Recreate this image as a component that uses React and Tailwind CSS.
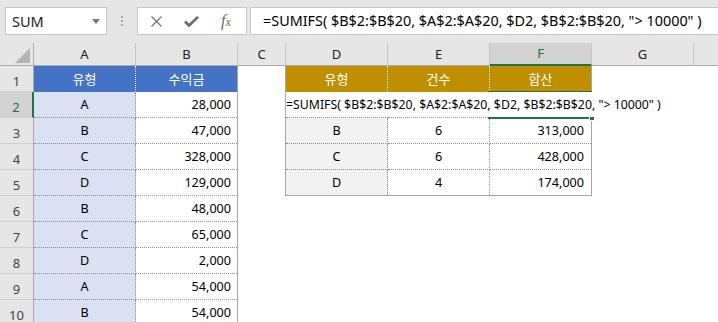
export default function App() {
  const ab = [
    ["A", "28,000"],
    ["B", "47,000"],
    ["C", "328,000"],
    ["D", "129,000"],
    ["B", "48,000"],
    ["C", "65,000"],
    ["D", "2,000"],
    ["A", "54,000"],
    ["B", "54,000"],
  ];
  const df = [
    ["B", "6", "313,000"],
    ["C", "6", "428,000"],
    ["D", "4", "174,000"],
  ];
  const rowNums = [1, 2, 3, 4, 5, 6, 7, 8, 9, 10];
  const formula = '=SUMIFS( $B$2:$B$20, $A$2:$A$20, $D2, $B$2:$B$20, "> 10000" )';

  return (
    <div className="w-[718px] h-[322px] overflow-hidden bg-white text-black font-['Noto_Sans','Noto_Sans_CJK_KR',sans-serif] text-[12.6px] leading-none">
      {/* Formula bar area */}
      <div className="h-[43px] bg-[#e6e6e6] flex items-start pt-[7px]">
        <div className="ml-[5px] w-[102px] h-[28px] bg-white border border-[#c6c6c6] flex items-center pl-[6px] pr-[6px] text-[14.5px] text-[#222]">
          <span className="flex-1">SUM</span>
          <svg width="8" height="5" viewBox="0 0 8 5">
            <path d="M0 0H8L4 5Z" fill="#7a7a7a" />
          </svg>
        </div>
        <div className="w-[30px] h-[28px] flex flex-col items-center justify-center gap-[2px]">
          <div className="w-[2px] h-[2px] bg-[#a8a8a8]" />
          <div className="w-[2px] h-[2px] bg-[#a8a8a8]" />
          <div className="w-[2px] h-[2px] bg-[#a8a8a8]" />
        </div>
        <div className="w-[110px] h-[28px] bg-white border border-[#c6c6c6] flex items-center pl-[12px]">
          <svg width="13" height="13" viewBox="0 0 13 13">
            <path d="M1.5 1.5L11.5 11.5M11.5 1.5L1.5 11.5" stroke="#7a7a7a" strokeWidth="1.4" />
          </svg>
          <svg className="ml-[21px]" width="15" height="11" viewBox="0 0 15 11">
            <path d="M1 5.5L5 9.5L14 1" stroke="#6f6f6f" strokeWidth="2.8" fill="none" />
          </svg>
          <span className="ml-[22px] font-['Liberation_Serif',serif] italic text-[16px] text-[#6a6a6a]">
            f<span className="text-[12px]">x</span>
          </span>
        </div>
        <div className="ml-[3px] flex-1 h-[28px] bg-white border border-r-0 border-[#c6c6c6] pl-[12px] flex items-center text-[14.4px] whitespace-nowrap overflow-hidden">
          {formula}
        </div>
      </div>

      {/* Column headers */}
      <div className="flex h-[23px] bg-[#e6e6e6] text-[13px] text-[#222]">
        <div className="w-[34px] border-r border-b border-[#ababab] flex items-end justify-end pr-[3px] pb-[2px]">
          <svg width="15" height="15" viewBox="0 0 15 15">
            <path d="M15 0V15H0Z" fill="#b4b4b4" />
          </svg>
        </div>
        <div className="w-[102px] border-r border-b border-r-[#c6c6c6] border-b-[#ababab] flex items-center justify-center">A</div>
        <div className="w-[102px] border-r border-b border-r-[#c6c6c6] border-b-[#ababab] flex items-center justify-center">B</div>
        <div className="w-[48px] border-r border-b border-r-[#c6c6c6] border-b-[#ababab] flex items-center justify-center">C</div>
        <div className="w-[102px] border-r border-b border-r-[#c6c6c6] border-b-[#ababab] flex items-center justify-center">D</div>
        <div className="w-[102px] border-r border-b border-r-[#c6c6c6] border-b-[#ababab] flex items-center justify-center">E</div>
        <div className="w-[102px] border-r border-r-[#c6c6c6] border-b-2 border-b-[#217346] bg-[#d2d2d2] text-[#217346] flex items-center justify-center">F</div>
        <div className="w-[102px] border-r border-b border-r-[#c6c6c6] border-b-[#ababab] flex items-center justify-center">G</div>
        <div className="flex-1 border-b border-[#ababab]" />
      </div>

      {/* Body */}
      <div className="flex items-start">
        {/* Row headers */}
        <div className="w-[34px] flex flex-col bg-[#e6e6e6] text-[13px] text-[#444]">
          {rowNums.map((n) =>
            n === 2 ? (
              <div key={n} className="h-[26px] border-b border-b-[#cfcfcf] border-r-2 border-r-[#217346] bg-[#d2d2d2] text-[#217346] flex items-center justify-center pt-[5px]">
                {n}
              </div>
            ) : (
              <div key={n} className="h-[26px] border-b border-b-[#cfcfcf] border-r border-r-[#ababab] flex items-center justify-center pt-[5px]">
                {n}
              </div>
            )
          )}
        </div>

        {/* Table A:B */}
        <div className="w-[204px] flex flex-col border-r border-[#a6a6a6]">
          <div className="flex h-[26px] bg-[#4472c4] text-white text-[13px]">
            <div className="w-[102px] border-r border-dotted border-white flex items-center justify-center">유형</div>
            <div className="flex-1 flex items-center justify-center">수익금</div>
          </div>
          {ab.map(([t, v], i) => (
            <div key={i} className="flex h-[26px]">
              <div className="w-[102px] bg-[#d9e1f2] border-r border-b border-dotted border-[#8c8c8c] flex items-center justify-center pt-[2px]">{t}</div>
              <div className="flex-1 border-b border-dotted border-[#8c8c8c] flex items-center justify-end pr-[6px] pt-[2px]">{v}</div>
            </div>
          ))}
        </div>

        {/* Column C */}
        <div className="w-[47px]" />

        {/* Table D:F */}
        <div className="w-[307px] flex flex-col border-l border-r border-b border-[#a6a6a6]">
          <div className="flex h-[26px] bg-[#bf8f00] text-white text-[13px]">
            <div className="w-[102px] border-r border-dotted border-white flex items-center justify-center">유형</div>
            <div className="w-[102px] border-r border-dotted border-white flex items-center justify-center">건수</div>
            <div className="flex-1 flex items-center justify-center">합산</div>
          </div>
          <div className="relative flex h-[26px]">
            <div className="w-[102px] border-b border-dotted border-[#8c8c8c]" />
            <div className="w-[102px] border-b border-dotted border-[#8c8c8c]" />
            <div className="relative flex-1">
              <div className="absolute left-[-2px] top-[-1px] w-[104px] h-[2px] bg-[#217346]" />
              <div className="absolute left-[-2px] bottom-[-1px] w-[101px] h-[2px] bg-[#217346]" />
              <div className="absolute right-[-4px] bottom-[-3px] w-[6px] h-[6px] bg-[#217346] border border-white" />
            </div>
            <div className="absolute left-0 top-0 h-[25px] bg-white pr-[4px] whitespace-nowrap flex items-center pt-[2px] z-10 text-[12.3px]">
              {formula}
            </div>
          </div>
          {df.map(([a, b, c], i) => (
            <div key={i} className={i === 2 ? "flex h-[25px]" : "flex h-[26px]"}>
              <div className={i === 2 ? "w-[102px] bg-[#f2f2f2] border-r border-dotted border-[#8c8c8c] flex items-center justify-center pt-[2px]" : "w-[102px] bg-[#f2f2f2] border-r border-b border-dotted border-[#8c8c8c] flex items-center justify-center pt-[2px]"}>{a}</div>
              <div className={i === 2 ? "w-[102px] border-r border-dotted border-[#8c8c8c] flex items-center justify-center pt-[2px]" : "w-[102px] border-r border-b border-dotted border-[#8c8c8c] flex items-center justify-center pt-[2px]"}>{b}</div>
              <div className={i === 2 ? "flex-1 flex items-center justify-end pr-[7px] pt-[2px]" : "flex-1 border-b border-dotted border-[#8c8c8c] flex items-center justify-end pr-[7px] pt-[2px]"}>{c}</div>
            </div>
          ))}
        </div>
      </div>
    </div>
  );
}
